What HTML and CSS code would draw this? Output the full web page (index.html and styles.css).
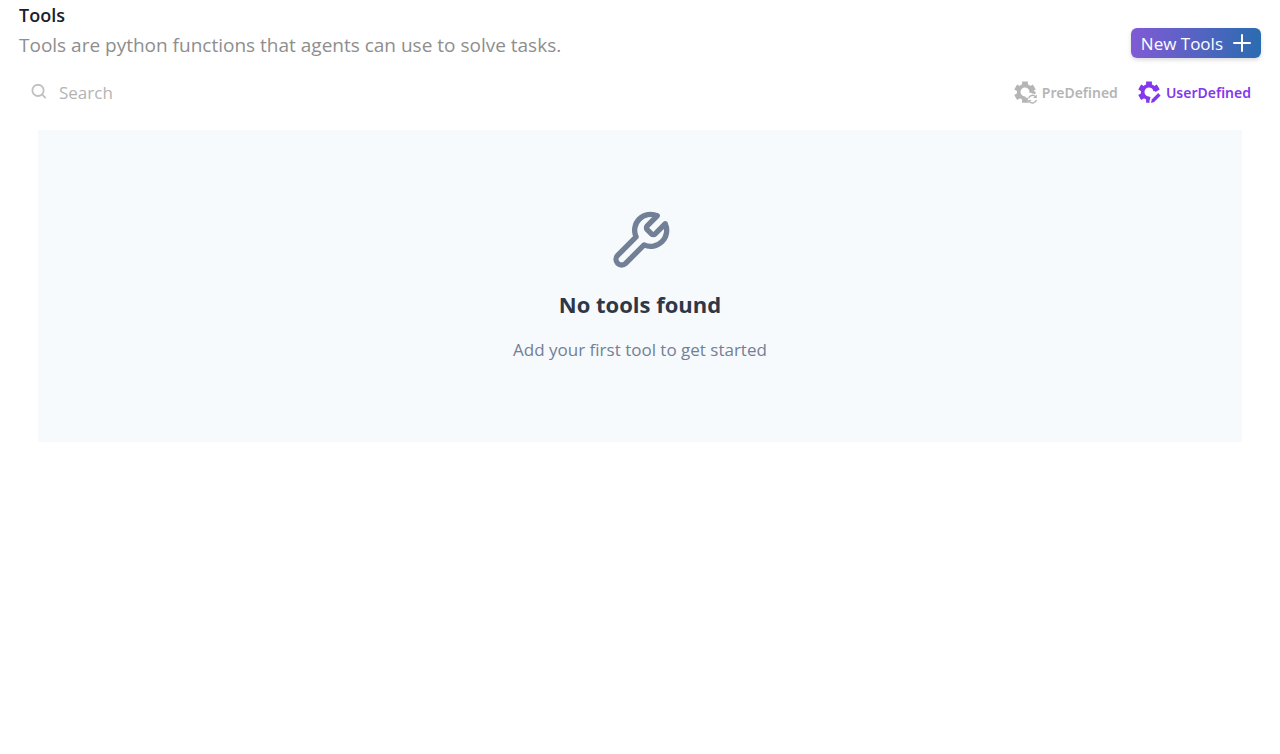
FILE: index.html
```html
<!DOCTYPE html>
<html lang="en">
<head>
    <meta charset="UTF-8">
    <meta name="viewport" content="width=device-width, initial-scale=1.0">
    <title>Tools</title>
    <link rel="stylesheet" href="styles.css">
</head>
<body>
    <main class="page">
        <header class="header">
            <div class="heading">
                <h1>Tools</h1>
                <p>Tools are python functions that agents can use to solve tasks.</p>
            </div>
            <button type="button" class="new-button">
                New Tools
                <svg width="18" height="18" viewBox="0 0 18 18" fill="none" stroke="currentColor" stroke-width="2" stroke-linecap="round" aria-hidden="true">
                    <path d="M9 1v16M1 9h16"/>
                </svg>
            </button>
        </header>

        <div class="toolbar">
            <label class="search">
                <svg width="16" height="16" viewBox="0 0 16 16" fill="none" stroke="currentColor" stroke-width="1.8" stroke-linecap="round" aria-hidden="true">
                    <circle cx="7" cy="6.4" r="5.6"/>
                    <path d="M11.2 10.6l3 3"/>
                </svg>
                <input type="search" placeholder="Search" aria-label="Search">
            </label>
            <div class="filters">
                <button type="button" class="filter">
                    <svg width="24" height="24" viewBox="0 0 24 24" fill="none" stroke="currentColor" aria-hidden="true">
                        <path d="M17.2 13A6.3 6.3 0 1 0 11.6 18.2" stroke-width="3.6"/>
                        <path d="M11 1.4v5M1.7 6.9l4.3 2.5M1.7 17.4l4.3-2.5M11 22.8v-5M20.3 6.9l-4.3 2.5" stroke-width="5.8"/>
                        <path d="M19 10.5l3 1.7-1 2-3-1z" fill="currentColor" stroke="none"/>
                        <path d="M14.6 18.4a4 4 0 0 1 6.8-1.8M22.4 19.8a4 4 0 0 1-6.8 2" stroke-width="1.4"/>
                        <path d="M22.8 14.6v3.4h-3.6zM14.2 23.4V20h3.4z" fill="currentColor" stroke="none"/>
                    </svg>
                    PreDefined
                </button>
                <button type="button" class="filter active">
                    <svg width="24" height="24" viewBox="0 0 24 24" fill="none" stroke="currentColor" aria-hidden="true">
                        <path d="M17.2 11A6.3 6.3 0 1 0 11.6 18.2" stroke-width="3.6"/>
                        <path d="M11 1.4v5M1.7 6.9l4.3 2.5M1.7 17.4l4.3-2.5M20.3 6.9l-4.3 2.5" stroke-width="5.8"/>
                        <path d="M8.1 17h4.4l-1 3.4v2.4H8.1z" fill="currentColor" stroke="none"/>
                        <path d="M13 23l.8-3.4 6.4-6.6 2.4 2.4-6.4 6.6z" fill="currentColor" stroke="none"/>
                    </svg>
                    UserDefined
                </button>
            </div>
        </div>

        <section class="empty">
            <svg width="64" height="64" viewBox="0 0 24 24" fill="none" stroke="currentColor" stroke-width="2" stroke-linecap="round" stroke-linejoin="round" aria-hidden="true">
                <path d="M14.7 6.3a1 1 0 0 0 0 1.4l1.6 1.6a1 1 0 0 0 1.4 0l3.77-3.77a6 6 0 0 1-7.94 7.94l-6.91 6.91a2.12 2.12 0 0 1-3-3l6.91-6.91a6 6 0 0 1 7.94-7.94l-3.76 3.76z"/>
            </svg>
            <h2>No tools found</h2>
            <p>Add your first tool to get started</p>
        </section>
    </main>
</body>
</html>
```

FILE: styles.css
```css
body {
    font-family: "Open Sans", "Noto Sans", sans-serif;
    margin: 0;
    background-color: #fff;
    color: #1a202c;
}
h1, h2, p {
    margin: 0;
    font-weight: 400;
}
button, input {
    font-family: inherit;
    border: none;
    background: none;
    padding: 0;
}
button {
    cursor: pointer;
}
.page {
    padding: 0 19px;
}
.header {
    display: flex;
    justify-content: space-between;
    align-items: flex-end;
}
.heading h1 {
    font-size: 18px;
    font-weight: 600;
    line-height: 30px;
}
.heading p {
    font-size: 19px;
    line-height: 30px;
    color: #8e8e8e;
}
.new-button {
    display: flex;
    align-items: center;
    gap: 10px;
    height: 30px;
    padding: 0 10px;
    margin-bottom: 2px;
    border-radius: 6px;
    background: linear-gradient(to right, #805ad5, #2b6cb0);
    box-shadow: 0 2px 4px rgba(0, 0, 0, 0.15);
    color: #fff;
    font-size: 17px;
}
.toolbar {
    display: flex;
    justify-content: space-between;
    align-items: center;
    height: 64px;
    padding: 0 10px 0 12px;
}
.search {
    display: flex;
    align-items: center;
    gap: 12px;
    color: #c0c0c0;
}
.search input {
    width: 240px;
    font-size: 17px;
    color: #333;
    outline: none;
}
.search input::placeholder {
    color: #b4b4b4;
}
.filters {
    display: flex;
    gap: 20px;
}
.filter {
    display: flex;
    align-items: center;
    gap: 4px;
    font-family: "Noto Sans", sans-serif;
    font-size: 14px;
    font-weight: 600;
    color: #b5b5b5;
}
.filter.active {
    color: #8338ec;
}
.empty {
    display: flex;
    flex-direction: column;
    align-items: center;
    margin: 6px 19px;
    padding: 79px 20px 78px;
    background-color: #f7fafc;
    color: #718096;
}
.empty h2 {
    margin: 15px 0 16px;
    font-size: 22px;
    font-weight: 700;
    line-height: 32px;
    color: #2d3748;
}
.empty p {
    font-size: 17px;
    line-height: 28px;
}
```
